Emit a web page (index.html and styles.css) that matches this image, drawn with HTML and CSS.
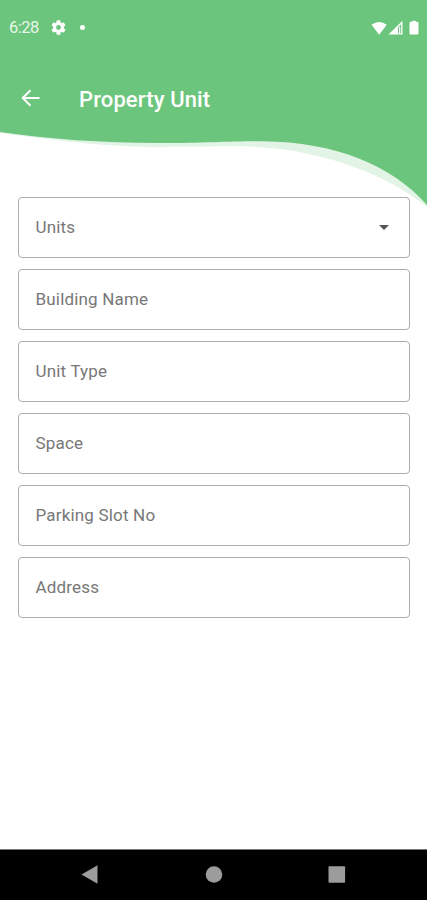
FILE: index.html
```html
<!DOCTYPE html>
<html lang="en">
<head>
<meta charset="utf-8">
<title>Property Unit</title>
<link rel="stylesheet" href="styles.css">
</head>
<body>
<div class="screen">
  <header class="header">
    <svg class="wave" viewBox="0 0 427 210" aria-hidden="true">
      <path fill="#e2f4e6" d="M0 0V133C70 142 110 147 160 147C200 147 222 146 250 146.500C322 149 388 175 427 207V0Z"/>
      <path fill="#6cc57c" d="M0 0V132C50 139 100 143 160 143C205 143 230 141 263 141.200C335 142 392 165 427 205V0Z"/>
    </svg>
    <div class="status">
      <span class="time">6:28</span>
      <svg class="gear" viewBox="2 2 20 20"><path fill="#fff" d="M19.140 12.940c.04-.3.06-.61.06-.94 0-.32-.02-.64-.07-.94l2.030-1.580a.49.49 0 0 0 .12-.61l-1.920-3.320a.49.49 0 0 0-.59-.22l-2.390.96a7 7 0 0 0-1.620-.94l-.36-2.540A.48.48 0 0 0 13.920 2.400h-3.840a.48.48 0 0 0-.48.41l-.36 2.540c-.59.24-1.130.57-1.620.94l-2.390-.96a.49.49 0 0 0-.59.22L2.720 8.870a.48.48 0 0 0 .12.61l2.030 1.580a6 6 0 0 0 0 1.880l-2.030 1.580a.49.49 0 0 0-.12.61l1.920 3.320c.12.22.37.29.59.22l2.390-.96c.5.38 1.030.7 1.620.94l.36 2.540c.05.24.24.41.48.41h3.840c.24 0 .44-.17.48-.41l.36-2.540a7 7 0 0 0 1.620-.94l2.390.96c.22.08.47 0 .59-.22l1.920-3.320a.48.48 0 0 0-.12-.61ZM12 15.200A3.200 3.200 0 1 1 12 8.800a3.200 3.200 0 0 1 0 6.400Z"/></svg>
      <span class="dot"></span>
      <svg class="signals" viewBox="0 0 50 16">
        <path fill="#fff" d="M0.500 4.300Q8 -1.300 15.800 4.300L8.200 14.200Z"/>
        <path fill="#fff" fill-rule="evenodd" d="M17.500 14L31.500 0.300V14ZM27 7V12.700H30.200V3.800Z"/>
        <path fill="#fff" d="M28 6.500h1.300v6H28Z"/>
        <path fill="#fff" d="M41 0.300h4v1h1.200q1.300 0 1.300 1.300V12.700q0 1.300-1.300 1.300H39.800q-1.300 0-1.300-1.300V2.600q0-1.300 1.300-1.300H41Z"/>
      </svg>
    </div>
    <div class="toolbar">
      <svg class="back" viewBox="0 0 20 20"><path fill="none" stroke="#fff" stroke-width="2" d="M19.500 10H3M10.500 2.200L2.700 10L10.500 17.800"/></svg>
      <h1 class="title">Property Unit</h1>
    </div>
  </header>
  <main class="form">
    <div class="field"><span>Units</span><i class="caret"></i></div>
    <div class="field"><span>Building Name</span></div>
    <div class="field"><span>Unit Type</span></div>
    <div class="field"><span>Space</span></div>
    <div class="field"><span>Parking Slot No</span></div>
    <div class="field"><span>Address</span></div>
  </main>
  <nav class="navbar">
    <svg viewBox="0 0 18 20"><path fill="#9c9c9c" d="M0.500 9.500L16.500 0.300V18.700Z"/></svg>
    <svg viewBox="0 0 18 20"><circle cx="9" cy="9.500" r="8.300" fill="#9c9c9c"/></svg>
    <svg viewBox="0 0 18 20"><rect x="0.500" y="1.200" width="16.600" height="16.600" rx="1" fill="#9c9c9c"/></svg>
  </nav>
</div>
</body>
</html>
```
FILE: styles.css
```css
* { box-sizing: border-box; }
body { margin: 0; background: #fff; font-family: Roboto, sans-serif; }
.screen { display: flex; flex-direction: column; width: 427px; height: 900px; }
.header { position: relative; height: 197px; }
.wave { position: absolute; top: 0; left: 0; width: 427px; height: 210px; }
.status { position: relative; display: flex; align-items: center; height: 55px; padding: 0 6px 0 9px; }
.time { width: 42px; color: #e6f6e8; font-size: 16.500px; line-height: 20px; letter-spacing: -0.550px; }
.gear { width: 15px; height: 15px; }
.dot { width: 5px; height: 5px; margin-left: 14px; border-radius: 50%; background: #fff; }
.signals { width: 50px; height: 16px; margin-left: auto; transform: translateY(0.500px); }
.toolbar { position: relative; display: flex; align-items: center; height: 90px; padding-left: 20px; }
.back { width: 20px; height: 20px; margin-top: -4px; }
.title { margin: 0 0 0 39px; color: #fff; font-size: 22px; line-height: 28px; font-weight: 500; letter-spacing: 0.120px; }
.form { position: relative; display: flex; flex: 1; flex-direction: column; gap: 11px; padding: 0 17px 0 18px; }
.field { display: flex; align-items: center; justify-content: space-between; height: 61px; padding: 0 20px 1px 16.500px; border: 1.500px solid #acacac; border-radius: 4px; background: #fff; color: #777; font-size: 17px; line-height: 24px; letter-spacing: 0.180px; }
.caret { border: solid transparent; border-width: 5px 5px 0; border-top-color: #555; }
.navbar { display: flex; align-items: center; justify-content: space-between; height: 51px; padding: 0 81px; background: #000; border-top: 1px solid #777; }
.navbar svg { width: 18px; height: 20px; }
```
